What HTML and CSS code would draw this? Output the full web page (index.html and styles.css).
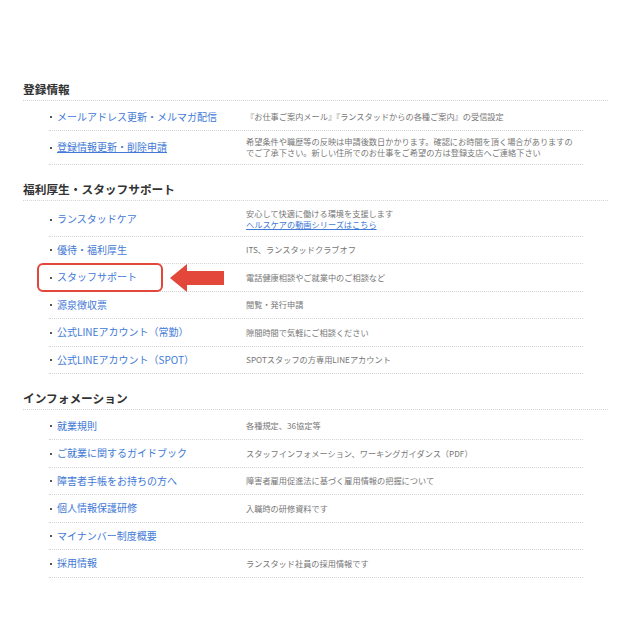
FILE: index.html
```html
<!DOCTYPE html>
<html lang="ja">
<head>
    <meta charset="utf-8">
    <title>マイページ メニュー</title>
    <link rel="stylesheet" href="styles.css">
</head>
<body>
    <div class="page">
        <section class="menu-section">
            <h2>登録情報</h2>
            <ul class="menu-list">
                <li class="menu-row">
                    <div class="menu-link"><a href="#">メールアドレス更新・メルマガ配信</a></div>
                    <div class="menu-desc">『お仕事ご案内メール』『ランスタッドからの各種ご案内』の受信設定</div>
                </li>
                <li class="menu-row">
                    <div class="menu-link"><a href="#" class="underline">登録情報更新・削除申請</a></div>
                    <div class="menu-desc">希望条件や職歴等の反映は申請後数日かかります。確認にお時間を頂く場合がありますの<br>でご了承下さい。新しい住所でのお仕事をご希望の方は登録支店へご連絡下さい</div>
                </li>
            </ul>
        </section>

        <section class="menu-section">
            <h2>福利厚生・スタッフサポート</h2>
            <ul class="menu-list">
                <li class="menu-row">
                    <div class="menu-link"><a href="#">ランスタッドケア</a></div>
                    <div class="menu-desc">安心して快適に働ける環境を支援します<br><a href="#" class="underline">ヘルスケアの動画シリーズはこちら</a></div>
                </li>
                <li class="menu-row">
                    <div class="menu-link"><a href="#">優待・福利厚生</a></div>
                    <div class="menu-desc">ITS、ランスタッドクラブオフ</div>
                </li>
                <li class="menu-row highlighted">
                    <div class="menu-link"><a href="#">スタッフサポート</a></div>
                    <div class="menu-desc">電話健康相談やご就業中のご相談など</div>
                    <span class="highlight-box"></span>
                    <svg class="highlight-arrow" width="54" height="28" viewBox="0 0 54 28">
                        <polygon points="0,14 17,0 17,7 54,7 54,21 17,21 17,28" fill="#e2473a"/>
                    </svg>
                </li>
                <li class="menu-row">
                    <div class="menu-link"><a href="#">源泉徴収票</a></div>
                    <div class="menu-desc">閲覧・発行申請</div>
                </li>
                <li class="menu-row">
                    <div class="menu-link"><a href="#">公式LINEアカウント（常勤）</a></div>
                    <div class="menu-desc">隙間時間で気軽にご相談ください</div>
                </li>
                <li class="menu-row">
                    <div class="menu-link"><a href="#">公式LINEアカウント（SPOT）</a></div>
                    <div class="menu-desc">SPOTスタッフの方専用LINEアカウント</div>
                </li>
            </ul>
        </section>

        <section class="menu-section">
            <h2>インフォメーション</h2>
            <ul class="menu-list">
                <li class="menu-row">
                    <div class="menu-link"><a href="#">就業規則</a></div>
                    <div class="menu-desc">各種規定、36協定等</div>
                </li>
                <li class="menu-row">
                    <div class="menu-link"><a href="#">ご就業に関するガイドブック</a></div>
                    <div class="menu-desc">スタッフインフォメーション、ワーキングガイダンス（PDF）</div>
                </li>
                <li class="menu-row">
                    <div class="menu-link"><a href="#">障害者手帳をお持ちの方へ</a></div>
                    <div class="menu-desc">障害者雇用促進法に基づく雇用情報の把握について</div>
                </li>
                <li class="menu-row">
                    <div class="menu-link"><a href="#">個人情報保護研修</a></div>
                    <div class="menu-desc">入職時の研修資料です</div>
                </li>
                <li class="menu-row">
                    <div class="menu-link"><a href="#">マイナンバー制度概要</a></div>
                    <div class="menu-desc"></div>
                </li>
                <li class="menu-row">
                    <div class="menu-link"><a href="#">採用情報</a></div>
                    <div class="menu-desc">ランスタッド社員の採用情報です</div>
                </li>
            </ul>
        </section>
    </div>
</body>
</html>
```
FILE: styles.css
```css
:root {
    --link: #4279d6;
    --heading: #333333;
    --desc: #777777;
    --rule: #d4d4d4;
    --alert: #e2473a;
}

* {
    margin: 0;
    padding: 0;
    box-sizing: border-box;
}

body {
    background: #ffffff;
    font-family: "Noto Sans CJK JP", "Noto Sans", sans-serif;
    color: var(--heading);
}

.page {
    width: 585px;
    margin-left: 23px;
    padding-top: 78px;
}

.menu-section + .menu-section {
    margin-top: 13px;
}

h2 {
    font-size: 11.7px;
    font-weight: bold;
    line-height: 18px;
    padding: 2px 0;
    border-bottom: 1px dotted var(--rule);
    color: var(--heading);
}

.menu-list {
    list-style: none;
    width: 534px;
    margin-left: 26px;
    padding-top: 2.5px;
}

.menu-row {
    position: relative;
    display: flex;
    align-items: center;
    padding: 5.25px 0;
    border-bottom: 1px dotted var(--rule);
}

.menu-link {
    width: 197px;
    flex-shrink: 0;
    display: flex;
    align-items: center;
    font-size: 10px;
    line-height: 16px;
}

.menu-link::before {
    content: "";
    width: 2px;
    height: 2px;
    margin: 1px 5px 0 1px;
    background: #555;
}

a {
    color: var(--link);
    text-decoration: none;
}

a.underline {
    text-decoration: underline;
}

.menu-desc {
    flex: 1;
    font-size: 8.2px;
    line-height: 11px;
    color: var(--desc);
    white-space: nowrap;
}

.highlight-box {
    position: absolute;
    left: -12px;
    top: -1px;
    width: 126px;
    height: 29px;
    border: 2px solid var(--alert);
    border-radius: 6px;
}

.highlight-arrow {
    position: absolute;
    left: 121px;
    top: -0.5px;
}
```
